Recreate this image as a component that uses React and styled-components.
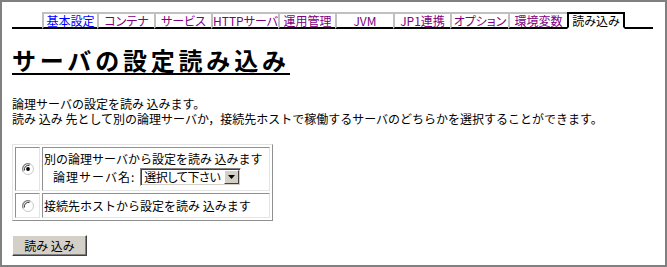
import React from "react";
import styled, { createGlobalStyle } from "styled-components";

const GlobalStyle = createGlobalStyle`
  html, body { margin: 0; padding: 0; background: #fff; }
  body { font-family: "Noto Sans CJK JP", "DejaVu Sans", sans-serif; font-size: 12px; color: #000; }
`;

const Frame = styled.div`
  box-sizing: border-box;
  width: 667px;
  height: 267px;
  border: 2px solid #808080;
  padding: 10px 10px 0 10px;
  overflow: hidden;
`;

const TabBar = styled.div`
  display: flex;
  align-items: flex-end;
`;

const TabLine = styled.div`
  width: ${(p) => p.$w}px;
  height: 2px;
  background: #000;
`;

const Tab = styled.div`
  box-sizing: border-box;
  width: ${(p) => p.$w}px;
  height: 17px;
  line-height: 13px;
  text-align: center;
  white-space: nowrap;
  font-size: 12px;
  font-feature-settings: "palt";
  color: ${(p) => (p.$active ? "#000" : p.$visited ? "#800080" : "#0000ff")};
  border-top: 2px solid ${(p) => (p.$active ? "#000" : "#c0c0c0")};
  border-left: 2px solid ${(p) => (p.$active ? "#000" : "#c0c0c0")};
  border-right: ${(p) => (p.$active ? "2px solid #000" : "none")};
  border-bottom: 2px solid ${(p) => (p.$active ? "#fff" : "#000")};
`;

const Title = styled.h1`
  display: inline-block;
  margin: 19px 0 0 0;
  font-size: 24px;
  line-height: 24px;
  font-weight: bold;
  letter-spacing: 3.8px;
  padding-bottom: 1px;
  border-bottom: 2px solid #000;
`;

const Intro = styled.p`
  margin: 21px 0 0 0;
  line-height: 15px;
`;

const Choices = styled.table`
  margin-top: 18px;
  width: 261px;
  border-collapse: separate;
  border-spacing: 2px;
  border: 1px solid;
  border-color: #e4e4e4 #909090 #909090 #e4e4e4;
`;

const Cell = styled.td`
  box-sizing: border-box;
  padding: 0 1px;
  height: ${(p) => p.$h}px;
  width: ${(p) => (p.$w ? `${p.$w}px` : "auto")};
  text-align: ${(p) => (p.$center ? "center" : "left")};
  vertical-align: middle;
  border: 1px solid;
  border-color: #909090 #e4e4e4 #e4e4e4 #909090;
  line-height: 14px;
  white-space: nowrap;
`;

const NameRow = styled.div`
  display: flex;
  align-items: center;
  gap: 5px;
  padding-left: 9px;
  margin-top: 2px;
`;

const Label = styled.span`
  letter-spacing: 1px;
`;

const Select = styled.div`
  box-sizing: border-box;
  display: flex;
  align-items: center;
  width: 101px;
  height: 18px;
  border: 1px solid;
  border-color: #808080 #fff #fff #808080;
  box-shadow: inset 1px 1px 0 #404040, inset -1px -1px 0 #d4d0c8;
  background: #fff;
  padding: 1px;
`;

const SelectText = styled.span`
  flex: 1;
  padding-left: 2px;
  line-height: 14px;
  letter-spacing: -0.4px;
  font-feature-settings: "palt";
  white-space: nowrap;
`;

const SelectArrow = styled.span`
  box-sizing: border-box;
  display: flex;
  flex: none;
  align-items: center;
  justify-content: center;
  width: 15px;
  height: 14px;
  background: #d4d0c8;
  border: 1px solid;
  border-color: #fff #404040 #404040 #fff;
`;

const Button = styled.button`
  box-sizing: border-box;
  display: block;
  margin-top: 14px;
  width: 75px;
  height: 21px;
  padding: 0;
  font-family: inherit;
  font-size: 12px;
  line-height: 15px;
  color: #000;
  background: #d4d0c8;
  border: 1px solid;
  border-color: #fff #404040 #404040 #fff;
  box-shadow: inset -1px -1px 0 #808080;
`;

function Radio({ checked }) {
  return (
    <svg width="12" height="12" viewBox="0 0 12 12" style={{ display: "block", margin: "0 auto" }}>
      <circle cx="6" cy="6" r="5.5" fill="#fff" stroke="#c8c8c8" strokeWidth="1" />
      <path d="M1.2 8.2 A5.3 5.3 0 0 1 8.2 1.2" fill="none" stroke="#808080" strokeWidth="1.2" />
      <path d="M2.5 7.4 A4 4 0 0 1 7.4 2.5" fill="none" stroke="#303030" strokeWidth="1" />
      {checked && <circle cx="6" cy="6" r="1.9" fill="#000" />}
    </svg>
  );
}

const tabs = [
  { label: "基本設定", w: 55 },
  { label: "コンテナ", w: 57, visited: true },
  { label: "サービス", w: 57, visited: true },
  { label: "HTTPサーバ", w: 67, visited: true },
  { label: "運用管理", w: 57, visited: true },
  { label: "JVM", w: 58, visited: true },
  { label: "JP1連携", w: 57, visited: true },
  { label: "オプション", w: 58, visited: true },
  { label: "環境変数", w: 59, visited: true },
  { label: "読み込み", w: 58, active: true },
];

export default function App() {
  return (
    <>
      <GlobalStyle />
      <Frame>
        <TabBar>
          <TabLine $w={30} />
          {tabs.map((t) => (
            <Tab key={t.label} $w={t.w} $active={t.active} $visited={t.visited}>
              {t.label}
            </Tab>
          ))}
          <TabLine $w={28} />
        </TabBar>

        <Title>サーバの設定読み込み</Title>

        <Intro>
          論理サーバの設定を読み 込みます。
          <br />
          読み 込み 先として別の論理サーバか，接続先ホストで稼働するサーバのどちらかを選択することができます。
        </Intro>

        <Choices>
          <tbody>
            <tr>
              <Cell $h={44} $w={25} $center>
                <Radio checked />
              </Cell>
              <Cell $h={44}>
                別の論理サーバから設定を読み 込みます
                <NameRow>
                  <Label>論理サーバ名:</Label>
                  <Select>
                    <SelectText>選択して下さい</SelectText>
                    <SelectArrow>
                      <svg width="7" height="4" viewBox="0 0 7 4">
                        <path d="M0 0 H7 L3.5 4 Z" fill="#000" />
                      </svg>
                    </SelectArrow>
                  </Select>
                </NameRow>
              </Cell>
            </tr>
            <tr>
              <Cell $h={25} $w={25} $center>
                <Radio />
              </Cell>
              <Cell $h={25}>接続先ホストから設定を読み 込みます</Cell>
            </tr>
          </tbody>
        </Choices>

        <Button>読み 込み</Button>
      </Frame>
    </>
  );
}
